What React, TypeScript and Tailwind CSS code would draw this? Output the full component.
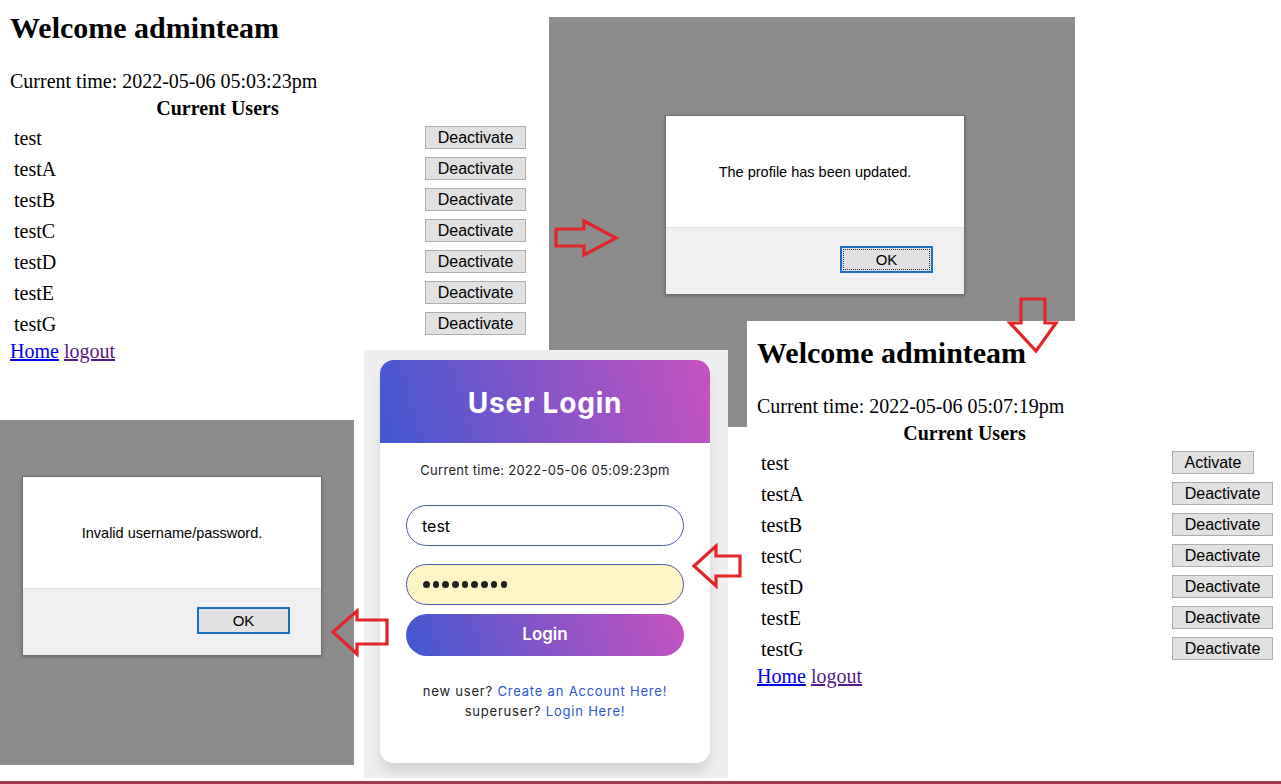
import React from "react";

const USERS = ["test", "testA", "testB", "testC", "testD", "testE", "testG"];

function AdminPage({ time, firstActivate, topPad }: { time: string; firstActivate: boolean; topPad: string }) {
  return (
    <div className={`h-full w-full bg-white pl-[10px] ${topPad} font-['Liberation_Serif',serif] text-black`}>
      <h1 className="text-[30px] font-bold leading-[36px]">Welcome adminteam</h1>
      <p className="mt-[23px] text-[20px] leading-[24px]">Current time: {time}</p>
      <div className="w-[518px]">
        <div className="mt-[3px] w-[415px] text-center text-[20px] font-bold leading-[24px]">Current Users</div>
        <div className="mt-[2px] flex flex-col">
          {USERS.map((u, i) => {
            const act = firstActivate && i === 0;
            return (
              <div key={u} className="flex h-[31px] items-center">
                <span className="w-[415px] pl-[4px] text-[20px] leading-[24px]">{u}</span>
                <button
                  className={`flex h-[23px] items-center justify-center border border-[#adadad] bg-[#e1e1e1] pt-[1px] font-['Liberation_Sans',sans-serif] text-[16px] leading-none text-black ${act ? "w-[82px]" : "w-[101px]"}`}
                >
                  {act ? "Activate" : "Deactivate"}
                </button>
              </div>
            );
          })}
        </div>
        <div className="text-[20px] leading-[24px]">
          <a className="text-[#0000ee] underline">Home</a> <a className="text-[#551a8b] underline">logout</a>
        </div>
      </div>
    </div>
  );
}

function Alert({ msg, dotted }: { msg: string; dotted: boolean }) {
  return (
    <div className="flex h-[180px] w-[300px] flex-col border border-[#707070] bg-white font-['Liberation_Sans',sans-serif] shadow-[0_1px_3px_rgba(0,0,0,0.25)]">
      <div className="flex h-[111px] items-center justify-center pt-[2px] text-[14.5px] text-black">{msg}</div>
      <div className="flex-1 border-t border-[#e3e3e3] bg-[#f0f0f0] pl-[174px] pt-[18px]">
        <button
          className={`flex h-[27px] w-[93px] items-center justify-center border-2 border-[#1a6fc2] bg-[#e1e1e1] text-[15px] leading-none text-black ${dotted ? "outline-1 outline-dotted outline-[#333] outline-offset-[-4px]" : ""}`}
        >
          OK
        </button>
      </div>
    </div>
  );
}

function Login() {
  return (
    <div className="h-full w-full bg-[#efefef] pl-[16px] pt-[10px]">
      <div className="h-[403px] w-[330px] overflow-hidden rounded-[14px] bg-white font-['Inter',sans-serif] shadow-[0_10px_14px_-2px_rgba(0,0,0,0.13)]">
        <div className="flex h-[83px] items-center justify-center bg-[linear-gradient(75deg,#4258d2_0%,#8654c7_50%,#c652c0_100%)] pt-[2px] text-[28px] font-bold tracking-[0.8px] text-white">
          User Login
        </div>
        <div className="px-[26px]">
          <p className="mt-[19px] text-center text-[13px] leading-[16px] tracking-[0.3px] text-[#222]">Current time: 2022-05-06 05:09:23pm</p>
          <div className="mt-[27px] flex h-[41px] items-center rounded-full border border-[#4b5aa6] pl-[15px] text-[16px] text-black">
            test
          </div>
          <div className="mt-[18px] flex h-[41px] items-center gap-[3.2px] rounded-full border border-[#4b5aa6] bg-[#fdf5c6] pl-[16px]">
            {Array.from({ length: 9 }).map((_, i) => (
              <span key={i} className="h-[6.5px] w-[6.5px] rounded-full bg-[#222]" />
            ))}
          </div>
          <button className="mt-[9px] flex h-[42px] w-full items-center justify-center rounded-full bg-[linear-gradient(70deg,#4258d2_0%,#8654c7_50%,#c652c0_100%)] text-[17px] font-semibold text-white">
            Login
          </button>
          <div className="mt-[25px] text-center text-[13px] leading-[20px] tracking-[0.8px] text-[#222]">
            <p>
              new user? <span className="text-[#2b56d6]">Create an Account Here!</span>
            </p>
            <p>
              superuser? <span className="text-[#2b56d6]">Login Here!</span>
            </p>
          </div>
        </div>
      </div>
    </div>
  );
}

export default function App() {
  return (
    <div className="relative h-[784px] w-[1281px] overflow-hidden bg-white">
      <div className="absolute left-0 top-0 h-[420px] w-[549px]">
        <AdminPage time="2022-05-06 05:03:23pm" firstActivate={false} topPad="pt-[10px]" />
      </div>

      <div className="absolute left-[549px] top-[17px] h-[410px] w-[526px] bg-[#8c8c8c] pl-[116px] pt-[98px]">
        <Alert msg="The profile has been updated." dotted={true} />
      </div>

      <div className="absolute left-0 top-[420px] h-[345px] w-[354px] bg-[#8c8c8c] pl-[22px] pt-[56px]">
        <Alert msg="Invalid username/password." dotted={false} />
      </div>

      <div className="absolute left-[747px] top-[321px] h-[463px] w-[534px]">
        <AdminPage time="2022-05-06 05:07:19pm" firstActivate={true} topPad="pt-[14px]" />
      </div>

      <div className="absolute left-[364px] top-[350px] h-[428px] w-[364px]">
        <Login />
      </div>

      <svg className="pointer-events-none absolute left-0 top-0" width="1281" height="784" viewBox="0 0 1281 784">
        <g fill="none" stroke="#e1252a" strokeWidth="3.2" strokeLinejoin="miter">
          <polygon points="556,229 584,229 584,221 616,238 584,255 584,246 556,246" />
          <polygon points="1021,299 1045,299 1045,323 1056,323 1036,351 1010,323 1021,323" />
          <polygon points="694,566 716,546 716,556 740,556 740,576 716,576 716,586" />
          <polygon points="333,632 357,611 357,620 387,620 387,644 357,644 357,654" />
        </g>
      </svg>

      <div className="absolute left-0 top-[781px] h-[3px] w-full bg-[#a23a4c]" />
    </div>
  );
}
